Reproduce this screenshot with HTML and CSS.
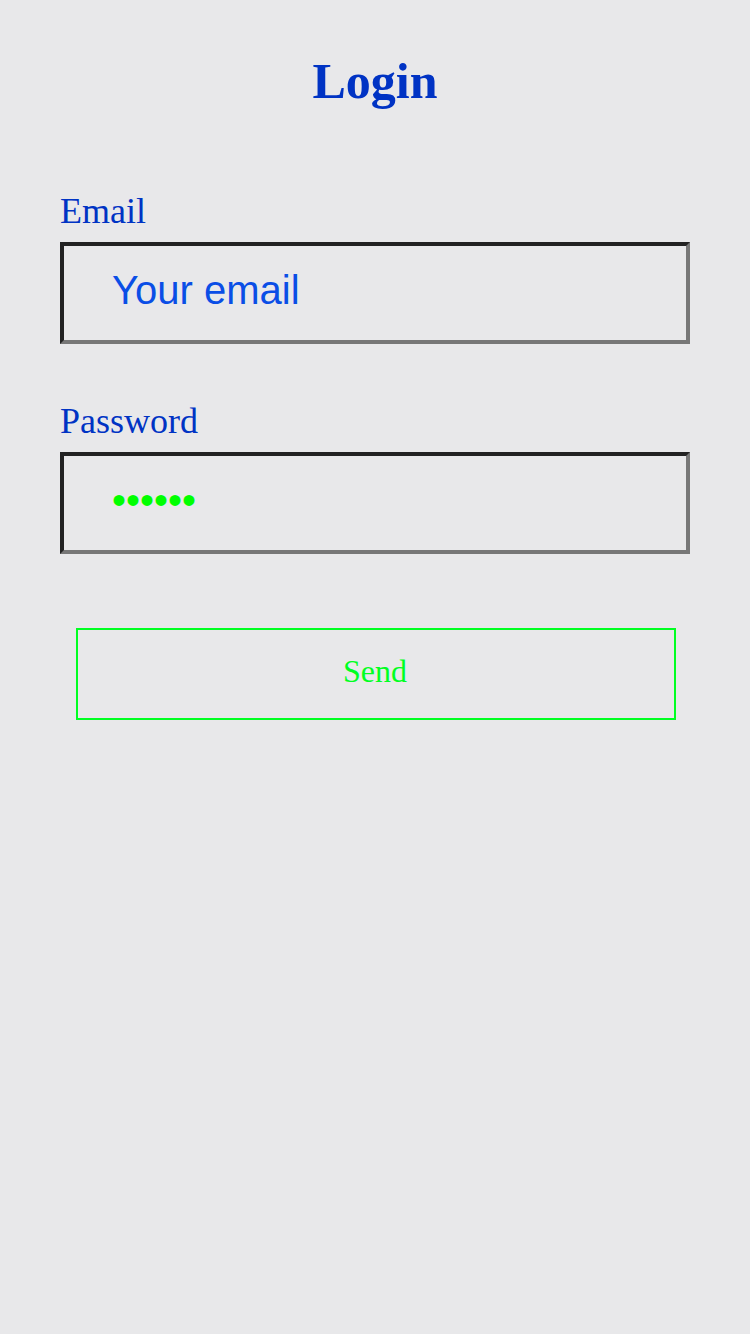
FILE: index.html
```html
<!DOCTYPE html>
<html>
<head>
<meta charset="utf-8">
<link rel="stylesheet" href="styles.css">
</head>
<body>
<main class="page">
  <h1 class="title">Login</h1>
  <form class="form">
    <div class="field">
      <label class="label" for="email">Email</label>
      <input class="input" id="email" type="email" placeholder="Your email">
    </div>
    <div class="field">
      <label class="label" for="pw">Password</label>
      <input class="input input-pw" id="pw" type="password" value="123456">
    </div>
    <div class="actions">
      <button class="send" type="button">Send</button>
    </div>
  </form>
</main>
</body>
</html>
```
FILE: styles.css
```css
html, body {
  margin: 0;
  padding: 0;
  background: #e8e8ea;
}
.page {
  padding: 52px 60px 0;
  font-family: "Liberation Serif", "Times New Roman", serif;
}
.title {
  margin: 0;
  text-align: center;
  font-size: 50px;
  font-weight: bold;
  color: #0033c4;
  line-height: 58px;
}
.form {
  display: flex;
  flex-direction: column;
  margin-top: 80px;
}
.field {
  display: flex;
  flex-direction: column;
  margin-bottom: 56px;
}
.label {
  font-size: 36px;
  line-height: 42px;
  color: #0033c4;
  margin-bottom: 10px;
}
.input {
  box-sizing: border-box;
  width: 100%;
  height: 102px;
  margin: 0;
  padding: 0 48px 5px;
  border: 4px solid;
  border-color: #222222 #777777 #777777 #222222;
  background: transparent;
  font-family: "Liberation Sans", Arial, sans-serif;
  font-size: 40px;
  color: #0044dd;
  outline: none;
}
.input::placeholder {
  color: #0a4ee6;
  opacity: 1;
}
.input-pw {
  color: #00ff00;
}
.actions {
  display: flex;
  padding: 18px 14px 0 16px;
}
.send {
  flex: 1;
  height: 92px;
  margin: 0;
  padding: 0 2px 6px 0;
  border: 2px solid #00ff22;
  background: transparent;
  font-family: "Liberation Serif", "Times New Roman", serif;
  font-size: 32px;
  color: #00ff22;
  cursor: pointer;
}
```
